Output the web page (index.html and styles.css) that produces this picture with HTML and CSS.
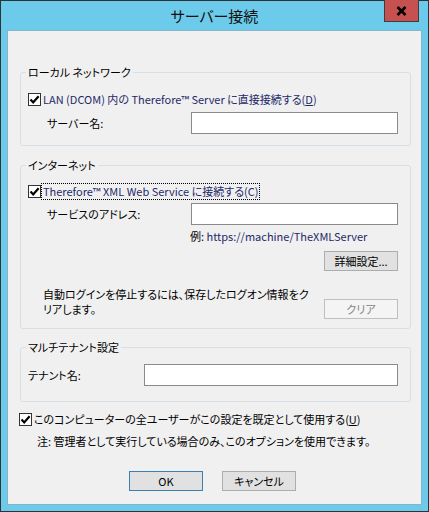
FILE: index.html
```html
<!DOCTYPE html>
<html lang="ja">
<head>
	<meta charset="utf-8">
	<link rel="stylesheet" href="styles.css">
</head>
<body>
	<div class="window">
		<div class="titlebar">
			<span class="title">サーバー接続</span>
			<button class="close" type="button" aria-label="閉じる">
				<svg width="11" height="10" viewBox="0 0 11 10"><path d="M1.5 1 L9.5 9 M9.5 1 L1.5 9" stroke="#000" stroke-width="2.6" fill="none"/></svg>
			</button>
		</div>

		<div class="client">
			<!-- ローカル -->
			<fieldset class="group group-local">
				<legend>ローカル ネットワーク</legend>
				<label class="check navy">
					<span class="box"><svg width="11" height="11" viewBox="0 0 11 11"><path d="M1.5 5.5 L4.2 8.4 L9.6 2.2" stroke="#000" stroke-width="2.2" fill="none"/></svg></span>
					<span>LAN (DCOM) 内の Therefore™ Server に直接接続する(<u>D</u>)</span>
				</label>
				<div class="field indent">
					<span class="label">サーバー名:</span>
					<input class="text" type="text">
				</div>
			</fieldset>

			<!-- インターネット -->
			<fieldset class="group group-web">
				<legend>インターネット</legend>
				<label class="check navy">
					<span class="box"><svg width="11" height="11" viewBox="0 0 11 11"><path d="M1.5 5.5 L4.2 8.4 L9.6 2.2" stroke="#000" stroke-width="2.2" fill="none"/></svg></span>
					<span class="focus">Therefore™ XML Web Service に接続する(C)</span>
				</label>
				<div class="field indent addr">
					<span class="label">サービスのアドレス:</span>
					<input class="text" type="text">
				</div>
				<div class="example">例: <span class="navy">https://machine/TheXMLServer</span></div>
				<div class="btn-right">
					<button class="btn" type="button">詳細設定...</button>
				</div>
				<div class="clear-row">
					<p class="desc">自動ログインを停止するには、保存したログオン情報をク<br>リアします。</p>
					<button class="btn clear" type="button" disabled>クリア</button>
				</div>
			</fieldset>

			<!-- マルチテナント -->
			<fieldset class="group group-tenant">
				<legend>マルチテナント設定</legend>
				<div class="field">
					<span class="label">テナント名:</span>
					<input class="text wide" type="text">
				</div>
			</fieldset>

			<label class="check all-users">
				<span class="box"><svg width="11" height="11" viewBox="0 0 11 11"><path d="M1.5 5.5 L4.2 8.4 L9.6 2.2" stroke="#000" stroke-width="2.2" fill="none"/></svg></span>
				<span>このコンピューターの全ユーザーがこの設定を既定として使用する(<u>U</u>)</span>
			</label>
			<p class="note">注: 管理者として実行している場合のみ、このオプションを使用できます。</p>

			<div class="actions">
				<button class="btn default" type="button">OK</button>
				<button class="btn" type="button">キャンセル</button>
			</div>
		</div>
	</div>
</body>
</html>
```

FILE: styles.css
```css
:root {
	--frame: #6ccbea;
	--face: #f0f0f0;
	--ink: #000;
	--navy: #1f2a68;
	--group-line: #d5dfe5;
	--field-line: #8a8a8a;
	--btn-face: #e1e1e1;
	--btn-line: #adadad;
}

* { box-sizing: border-box; }

body {
	margin: 0;
	font-family: "Noto Sans CJK JP", "Noto Sans", sans-serif;
	font-feature-settings: "palt";
	font-size: 11px;
	line-height: 15px;
	color: var(--ink);
}

.window {
	width: 429px;
	height: 512px;
	background: var(--frame);
	border: 1px solid #2f3336;
	padding: 0 6px 6px;
}

.titlebar {
	position: relative;
	height: 29px;
	text-align: center;
}

.title {
	font-size: 15px;
	line-height: 29px;
	color: #111;
}

.close {
	position: absolute;
	top: -1px;
	right: 3px;
	width: 35px;
	height: 22px;
	padding: 0;
	background: #c75050;
	border: 1px solid #3d3d3d;
	border-top: none;
	display: flex;
	align-items: center;
	justify-content: center;
}

.client {
	height: 475px;
	background: var(--face);
	border: 1px solid #86b4c8;
	padding: 0 10px 0 12px;
}

.group {
	margin: 0;
	border: 1px solid var(--group-line);
	border-radius: 3px;
	padding: 0 12px 0 7px;
}

.group legend {
	padding: 0 2px;
	margin-left: -2px;
	line-height: 14px;
}

.group-local { margin-top: 34px; padding-top: 12px; padding-bottom: 11px; }
.group-web { margin-top: 12px; padding-top: 11px; padding-bottom: 9px; }
.group-tenant { margin-top: 11px; padding-top: 10px; padding-bottom: 15px; }

.navy { color: var(--navy); }

.check {
	display: flex;
	align-items: center;
	height: 16px;
}

.box {
	width: 13px;
	height: 13px;
	border: 1px solid #333;
	background: #fff;
	margin-right: 2px;
	display: flex;
	align-items: center;
	justify-content: center;
	flex: none;
}

.focus {
	outline: 1px dotted #000;
	outline-offset: 0;
	padding: 0 1px;
	margin-left: -1px;
}

.field {
	display: flex;
	align-items: center;
	justify-content: space-between;
	margin-top: 5px;
}

.indent { padding-left: 19px; }
.addr { margin-top: 4px; }
.group-tenant .field { margin-top: 0; }

.text {
	width: 207px;
	height: 22px;
	border: 1px solid var(--field-line);
	background: #fff;
	padding: 0 3px;
	font: inherit;
}

.text.wide { width: 254px; }

.example {
	margin-top: 4px;
	margin-left: 162px;
	line-height: 14px;
}

.btn-right {
	display: flex;
	justify-content: flex-end;
	margin-top: 8px;
}

.btn {
	width: 74px;
	height: 20px;
	padding: 0;
	background: var(--btn-face);
	border: 1px solid var(--btn-line);
	font: inherit;
	line-height: 18px;
	color: var(--ink);
}

.clear-row {
	display: flex;
	justify-content: space-between;
	align-items: flex-start;
	margin-top: 16px;
}

.desc {
	margin: 0 0 0 15px;
	line-height: 15px;
	white-space: nowrap;
}

.btn.clear {
	margin-top: 12px;
	background: #f4f4f4;
	border-color: #bfbfbf;
	color: #838383;
}

.all-users {
	margin-top: 9px;
	margin-left: -1px;
}

.note {
	margin: 7px 0 0 17px;
	line-height: 15px;
}

.actions {
	display: flex;
	gap: 19px;
	margin: 22px 0 0 109px;
}

.btn.default { border-color: #3c7fb1; }
```
